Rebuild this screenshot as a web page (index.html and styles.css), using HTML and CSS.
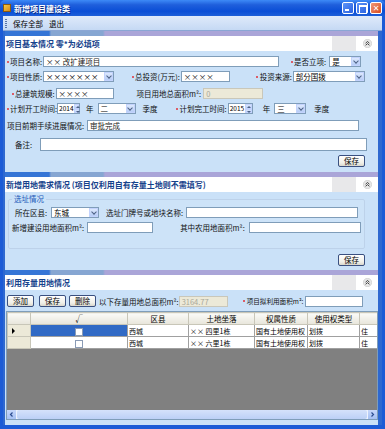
FILE: index.html
```html
<!DOCTYPE html>
<html lang="zh-CN">
<head>
    <meta charset="UTF-8">
    <title>新增项目建设类</title>
    <link rel="stylesheet" href="styles.css">
</head>
<body>
<div class="window">
    <div class="titlebar">
        <span class="app-icon"></span>
        <span class="title">新增项目建设类</span>
        <div class="ctrls">
            <span class="ctrl min"></span>
            <span class="ctrl max"></span>
            <span class="ctrl close">✕</span>
        </div>
    </div>

    <div class="frame">
        <div class="menubar">
            <span class="grip"></span>
            <span class="menu-item">保存全部</span>
            <span class="menu-item">退出</span>
        </div>

        <div class="client">
            <!-- 项目基本情况 -->
            <section class="panel">
                <div class="stripe"></div>
                <div class="panel-head">
                    <span class="head-text">项目基本情况 零*为必填项</span>
                    <span class="head-gray"></span>
                    <span class="collapse"><svg width="9" height="9" viewBox="0 0 9 9"><circle cx="4.5" cy="4.5" r="4.2" fill="#e6e6e6" stroke="#c8c8c8" stroke-width="0.6"/><path d="M2.6 4.2 L4.5 2.5 L6.4 4.2 M2.6 6.3 L4.5 4.6 L6.4 6.3" fill="none" stroke="#333" stroke-width="0.9"/></svg></span>
                </div>
                <div class="panel-body body1">
                    <div class="row r1">
                        <span class="req"></span><span class="lbl">项目名称:</span>
                        <span class="input f-name">×× 改扩建项目</span>
                        <span class="req ml-approved"></span><span class="lbl">是否立项:</span>
                        <span class="combo f-approved"><span class="val">是</span><span class="drop"></span></span>
                    </div>
                    <div class="row r2">
                        <span class="req"></span><span class="lbl">项目性质:</span>
                        <span class="combo f-nature"><span class="val">×××××××</span><span class="drop"></span></span>
                        <span class="req ml-invest"></span><span class="lbl">总投资(万元):</span>
                        <span class="input f-invest">××××</span>
                        <span class="req ml-source"></span><span class="lbl">投资来源:</span>
                        <span class="combo f-source"><span class="val">部分国拨</span><span class="drop"></span></span>
                    </div>
                    <div class="row r3">
                        <span class="req ml-scale"></span><span class="lbl">总建筑规模:</span>
                        <span class="input f-scale">××××</span>
                        <span class="lbl ml-area">项目用地总面积m²:</span>
                        <span class="input disabled f-area">0</span>
                    </div>
                    <div class="row r4">
                        <span class="req"></span><span class="lbl">计划开工时间:</span>
                        <span class="spin"><span class="val">2014</span><span class="arrows"><i class="up"></i><i class="down"></i></span></span>
                        <span class="lbl ml-year">年</span>
                        <span class="combo f-quarter"><span class="val">二</span><span class="drop"></span></span>
                        <span class="lbl ml-qtr">季度</span>
                        <span class="req ml-end"></span><span class="lbl">计划完工时间:</span>
                        <span class="spin s-end"><span class="val">2015</span><span class="arrows"><i class="up"></i><i class="down"></i></span></span>
                        <span class="lbl ml-year2">年</span>
                        <span class="combo f-quarter2"><span class="val">三</span><span class="drop"></span></span>
                        <span class="lbl ml-qtr2">季度</span>
                    </div>
                    <div class="row r5">
                        <span class="lbl ml-progress">项目前期手续进展情况:</span>
                        <span class="input f-progress">审批完成</span>
                    </div>
                    <div class="row r6">
                        <span class="lbl ml-note">备注:</span>
                        <span class="input f-note"></span>
                    </div>
                    <div class="actions a1"><button class="btn">保存</button></div>
                </div>
            </section>

            <!-- 新增用地需求情况 -->
            <section class="panel">
                <div class="stripe"></div>
                <div class="panel-head">
                    <span class="head-text">新增用地需求情况 (项目仅利用自有存量土地则不需填写)</span>
                    <span class="head-gray"></span>
                    <span class="collapse"><svg width="9" height="9" viewBox="0 0 9 9"><circle cx="4.5" cy="4.5" r="4.2" fill="#e6e6e6" stroke="#c8c8c8" stroke-width="0.6"/><path d="M2.6 4.2 L4.5 2.5 L6.4 4.2 M2.6 6.3 L4.5 4.6 L6.4 6.3" fill="none" stroke="#333" stroke-width="0.9"/></svg></span>
                </div>
                <div class="panel-body body2">
                    <fieldset class="group">
                        <legend>选址情况</legend>
                        <div class="row ra">
                            <span class="lbl ml-district">所在区县:</span>
                            <span class="combo f-district"><span class="val">东城</span><span class="drop"></span></span>
                            <span class="lbl ml-site">选址门牌号或地块名称:</span>
                            <span class="input f-site"></span>
                        </div>
                        <div class="row rb">
                            <span class="lbl ml-new">新增建设用地面积m²:</span>
                            <span class="input f-new"></span>
                            <span class="lbl ml-farm">其中农用地面积m²:</span>
                            <span class="input f-farm"></span>
                        </div>
                    </fieldset>
                    <div class="actions a2"><button class="btn">保存</button></div>
                </div>
            </section>

            <!-- 利用存量用地情况 -->
            <section class="panel last">
                <div class="stripe"></div>
                <div class="panel-head">
                    <span class="head-text">利用存量用地情况</span>
                    <span class="head-gray"></span>
                    <span class="collapse"><svg width="9" height="9" viewBox="0 0 9 9"><circle cx="4.5" cy="4.5" r="4.2" fill="#e6e6e6" stroke="#c8c8c8" stroke-width="0.6"/><path d="M2.6 4.2 L4.5 2.5 L6.4 4.2 M2.6 6.3 L4.5 4.6 L6.4 6.3" fill="none" stroke="#333" stroke-width="0.9"/></svg></span>
                </div>
                <div class="panel-body body3">
                    <div class="row toolbar">
                        <button class="btn tb-add">添加</button>
                        <button class="btn tb-save">保存</button>
                        <button class="btn tb-del">删除</button>
                        <span class="lbl ml-total">以下存量用地总面积m²:</span>
                        <span class="input disabled f-total">3164.77</span>
                        <span class="req ml-use"></span><span class="lbl small">项目拟利用面积m²:</span>
                        <span class="input f-use"></span>
                    </div>
                    <div class="grid">
                        <table>
                            <tr class="hdr">
                                <th class="c-ind"></th>
                                <th class="c-chk">√</th>
                                <th class="c-dist">区县</th>
                                <th class="c-loc">土地坐落</th>
                                <th class="c-own">权属性质</th>
                                <th class="c-type">使用权类型</th>
                                <th class="c-more"></th>
                            </tr>
                            <tr>
                                <td class="ind"><span class="tri"></span></td>
                                <td class="chk sel"><span class="box"></span></td>
                                <td>西城</td>
                                <td>×× 四里1栋</td>
                                <td>国有土地使用权</td>
                                <td>划拨</td>
                                <td>住</td>
                            </tr>
                            <tr>
                                <td class="ind"></td>
                                <td class="chk"><span class="box"></span></td>
                                <td>西城</td>
                                <td>×× 六里1栋</td>
                                <td>国有土地使用权</td>
                                <td>划拨</td>
                                <td>住</td>
                            </tr>
                        </table>
                        <div class="empty"></div>
                        <div class="hscroll">
                            <span class="sb-btn"><svg width="9" height="9" viewBox="0 0 9 9"><path d="M5.5 2.5 L3.5 4.5 L5.5 6.5" fill="none" stroke="#2c4c90" stroke-width="1.2"/></svg></span>
                            <span class="sb-thumb"></span>
                            <span class="sb-btn"><svg width="9" height="9" viewBox="0 0 9 9"><path d="M3.5 2.5 L5.5 4.5 L3.5 6.5" fill="none" stroke="#2c4c90" stroke-width="1.2"/></svg></span>
                        </div>
                    </div>
                </div>
            </section>
        </div>
    </div>
</div>
</body>
</html>
```

FILE: styles.css
```css
* {
    box-sizing: border-box;
}

body {
    margin: 0;
    font-family: "Noto Sans CJK SC", "DejaVu Sans", sans-serif;
    font-size: 7.5px;
    color: #000;
}

.window {
    width: 385px;
    height: 429px;
    background: #1c5bd6;
    overflow: hidden;
}

/* title bar */
.titlebar {
    height: 16px;
    display: flex;
    align-items: center;
    padding: 0 3px;
    background: linear-gradient(#3d8af7, #1f5fdc 30%, #0a4ed6 70%, #1d5fd8);
    border-radius: 5px 5px 0 0;
}

.app-icon {
    width: 8px;
    height: 8px;
    background: linear-gradient(135deg, #f6c844, #d88a1a);
    border: 1px solid #8a5a10;
    margin-right: 3px;
}

.title {
    color: #fff;
    font-weight: bold;
    font-size: 8px;
    text-shadow: 1px 1px 0 #0a2a80;
}

.ctrls {
    margin-left: auto;
    display: flex;
    gap: 2px;
}

.ctrl {
    width: 12px;
    height: 12px;
    border: 1px solid #fff;
    border-radius: 2px;
    background: linear-gradient(135deg, #5d94f8, #2a62e0);
    position: relative;
    color: #fff;
    font-size: 8px;
    line-height: 10px;
    text-align: center;
    font-weight: bold;
}

.ctrl.min::after {
    content: "";
    position: absolute;
    left: 2px;
    bottom: 2px;
    width: 4px;
    height: 2px;
    background: #fff;
}

.ctrl.max::after {
    content: "";
    position: absolute;
    left: 2px;
    top: 2px;
    width: 6px;
    height: 6px;
    border: 1px solid #fff;
    border-top-width: 2px;
}

.ctrl.close {
    background: linear-gradient(135deg, #f09a78, #d9491e);
}

/* frame */
.frame {
    height: 409px;
    margin: 0 3px;
    background: #c9def6;
}

.menubar {
    height: 15px;
    display: flex;
    align-items: center;
    gap: 6px;
    padding-left: 2px;
    background: linear-gradient(#dfeafa, #c5d9f4);
    border-bottom: 1px solid #8aa6d4;
}

.grip {
    width: 2px;
    height: 9px;
    background: repeating-linear-gradient(#5573a8 0 1px, transparent 1px 2px);
}

.client {
    height: 394px;
    border-left: 2px solid #2e68d0;
    border-right: 4px solid #2e68d0;
    background: #cae1f8;
}

/* panels */
.panel {
    background: #cae1f8;
}

.stripe {
    height: 5px;
    background: linear-gradient(90deg, #3575d6 0, #3575d6 44px, #86a6d2 46px, #86a6d2 98px, #aaa5d8 100px);
}

.panel-head {
    height: 15px;
    display: flex;
    align-items: center;
    background: #fff;
    padding-left: 1px;
}

.head-text {
    color: #15428b;
    font-weight: bold;
    font-size: 8px;
}

.head-gray {
    margin-left: auto;
    width: 24px;
    height: 15px;
    background: #e8e8ea;
}

.collapse {
    width: 22px;
    display: flex;
    justify-content: center;
}

.body1 {
    height: 121px;
    padding-top: 5px;
}

.body2 {
    height: 78px;
    padding-top: 3px;
}

.body3 {
    height: 133px;
    padding-top: 5px;
}

.row {
    display: flex;
    align-items: center;
    height: 11px;
    white-space: nowrap;
}

.r2 { margin-top: 4px; }
.r3 { margin-top: 6px; }
.r4 { margin-top: 4px; }
.r5 { margin-top: 6px; }
.r6 { margin-top: 7px; height: 13px; }

.req {
    width: 5px;
    height: 11px;
    display: flex;
    align-items: center;
    justify-content: center;
}

.req::before {
    content: "";
    width: 2px;
    height: 2px;
    border-radius: 50%;
    background: #e0303a;
}

.lbl {
    color: #111;
}

.lbl.small {
    font-size: 6.6px;
}

.input {
    height: 11px;
    border: 1px solid #7f9db9;
    background: #fff;
    padding-left: 2px;
    line-height: 9px;
    color: #222;
    overflow: hidden;
}

.input.disabled {
    background: #ece9d8;
    color: #a9a89a;
    border-color: #c9c7ba;
}

.combo {
    height: 11px;
    display: flex;
    border: 1px solid #7f9db9;
    background: #fff;
}

.combo .val {
    flex: 1;
    padding-left: 2px;
    line-height: 9px;
}

.drop {
    width: 9px;
    background: linear-gradient(#dce8fd, #b7cdf6);
    border: 1px solid #c3d3fd;
    display: flex;
    justify-content: center;
    align-items: center;
}

.drop::after {
    content: "";
    width: 3px;
    height: 3px;
    border-right: 1.3px solid #4d6185;
    border-bottom: 1.3px solid #4d6185;
    transform: translateY(-1px) rotate(45deg);
}

.spin {
    width: 23px;
    height: 11px;
    display: flex;
    border: 1px solid #7f9db9;
    background: #fff;
}

.spin .val {
    flex: 1;
    padding-left: 1px;
    line-height: 9px;
    font-size: 6.5px;
}

.arrows {
    width: 7px;
    display: flex;
    flex-direction: column;
}

.arrows i {
    flex: 1;
    background: linear-gradient(#dce8fd, #b7cdf6);
    border: 0.5px solid #c3d3fd;
    position: relative;
}

.arrows i::after {
    content: "";
    position: absolute;
    left: 1.5px;
    border-left: 2px solid transparent;
    border-right: 2px solid transparent;
}

.arrows .up::after {
    top: 1px;
    border-bottom: 2px solid #4d6185;
}

.arrows .down::after {
    top: 1px;
    border-top: 2px solid #4d6185;
}

/* field sizes and offsets */
.f-name { width: 236px; margin-left: 1px; }
.ml-approved { margin-left: 10px; }
.f-approved { width: 32px; margin-left: 3px; }
.f-nature { width: 71px; margin-left: 1px; }
.ml-invest { margin-left: 16px; }
.f-invest { width: 49px; margin-left: 1px; }
.ml-source { margin-left: 25px; }
.f-source { width: 72px; margin-left: 1px; }
.ml-scale { margin-left: 5px; }
.f-scale { width: 58px; margin-left: 1px; }
.ml-area { margin-left: 23px; }
.f-area { width: 60px; margin-left: 2px; }
.ml-year { margin-left: 6px; }
.f-quarter { width: 38px; margin-left: 4px; }
.ml-qtr { margin-left: 7px; }
.ml-end { margin-left: 17px; }
.s-end { width: 25px; margin-left: 1px; }
.ml-year2 { margin-left: 10px; }
.f-quarter2 { width: 32px; margin-left: 4px; }
.ml-qtr2 { margin-left: 8px; }
.ml-progress { margin-left: 2px; }
.f-progress { width: 272px; margin-left: 3px; }
.ml-note { margin-left: 10px; }
.f-note { width: 327px; height: 13px; margin-left: 8px; }

.actions {
    display: flex;
    justify-content: flex-end;
    padding-right: 13px;
}

.a1 { margin-top: 4px; }
.a2 { margin-top: 5px; }

.btn {
    height: 12px;
    padding: 0 5px;
    font-family: inherit;
    font-size: 7.5px;
    line-height: 10px;
    border: 1px solid #3a5080;
    border-radius: 2px;
    background: linear-gradient(#ffffff, #f0efe8 70%, #d8d6cc);
    color: #000;
}

/* group box */
.group {
    margin: 0 13px 0 3px;
    padding: 4px 0 8px 0;
    height: 54px;
    border: 1px solid #bdd2ea;
    border-radius: 2px;
    background: #cde3f8;
}

.group legend {
    color: #2259b8;
    padding: 0 2px;
    margin-left: 3px;
    font-size: 7.5px;
    line-height: 8px;
}

.rb { margin-top: 4px; }

.ml-district { margin-left: 6px; }
.f-district { width: 48px; margin-left: 4px; }
.ml-site { margin-left: 7px; }
.f-site { width: 172px; margin-left: 3px; }
.ml-new { margin-left: 3px; }
.f-new { width: 66px; margin-left: 3px; }
.ml-farm { margin-left: 27px; }
.f-farm { width: 112px; margin-left: 4px; }

/* stock land */
.toolbar {
    height: 12px;
    padding-left: 2px;
}

.tb-save { margin-left: 5px; }
.tb-del { margin-left: 3px; }
.ml-total { margin-left: 3px; }
.f-total { width: 49px; }
.ml-use { margin-left: 14px; }
.f-use { width: 58px; margin-left: 2px; }

.grid {
    height: 109px;
    margin: 4px 0 0 1px;
    background: #808080;
    border: 1px solid #7f9db9;
    overflow: hidden;
}

.grid table {
    border-collapse: collapse;
    background: #fff;
    table-layout: fixed;
    width: 375px;
    font-size: 7px;
}

.grid th,
.grid td {
    height: 12px;
    padding: 0 1px;
    font-weight: normal;
    border: 1px solid #a0a0a0;
    white-space: nowrap;
    overflow: hidden;
    line-height: 10px;
}

.grid th {
    background: linear-gradient(#fbfbf8, #e7e5da);
    text-align: center;
    border-color: #c8c6b8;
    font-size: 7.5px;
}

.c-ind { width: 23px; }
.c-chk { width: 97px; }
.c-dist { width: 61px; }
.c-loc { width: 66px; }
.c-own { width: 53px; }
.c-type { width: 52px; }
.c-more { width: 23px; }

.grid td.ind {
    background: #ece9d8;
    border-color: #c8c6b8;
}

.tri {
    display: inline-block;
    border-top: 3px solid transparent;
    border-bottom: 3px solid transparent;
    border-left: 3px solid #000;
    margin-left: 3px;
}

.grid td.chk {
    text-align: center;
}

.grid td.sel {
    background: #316ac5;
}

.box {
    display: inline-block;
    width: 8px;
    height: 8px;
    border: 1px solid #8a9bb5;
    background: #fff;
    vertical-align: middle;
}

.empty {
    height: 61px;
}

.hscroll {
    height: 9px;
    display: flex;
    background: #eef3fd;
}

.sb-btn {
    width: 9px;
    height: 9px;
    background: linear-gradient(#c6d7fa, #a6c0f3);
    display: flex;
}

.sb-thumb {
    flex: 1;
    margin: 0 1px;
    background: linear-gradient(#d5e2fb, #bcd0f6);
    border-radius: 2px;
}
```
